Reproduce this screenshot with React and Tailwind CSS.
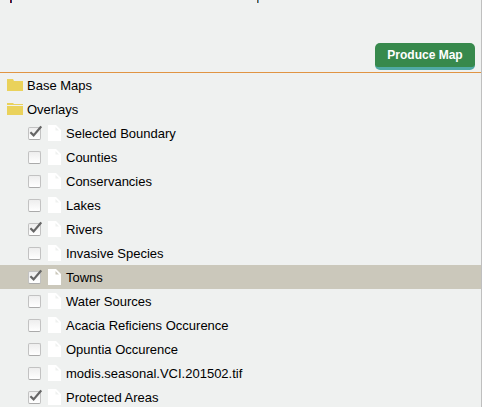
const layers = [
  { name: 'Selected Boundary', checked: true },
  { name: 'Counties' },
  { name: 'Conservancies' },
  { name: 'Lakes' },
  { name: 'Rivers', checked: true },
  { name: 'Invasive Species' },
  { name: 'Towns', checked: true, active: true },
  { name: 'Water Sources' },
  { name: 'Acacia Reficiens Occurence' },
  { name: 'Opuntia Occurence' },
  { name: 'modis.seasonal.VCI.201502.tif' },
  { name: 'Protected Areas', checked: true },
];

function Folder({ open }) {
  return (
    <svg className="mt-1.5 h-3 w-4 shrink-0" viewBox="0 0 16 12" fill="#ead25b">
      {open ? (
        <path d="M0 0h6l1 1h9v1H0zM0 3h16v9H0z" />
      ) : (
        <path d="M0 0h6l1 2h9v10H0z" />
      )}
    </svg>
  );
}

function FileIcon({ active }) {
  return (
    <svg className="mt-1 ml-[7px] h-4 w-[13px] shrink-0" viewBox="0 0 13 16">
      <path d="M0 0h8l5 5v11H0z" fill="#fff" />
      <path d="M7.5 2l3.5 3.5H7.5z" fill={active ? '#cbc8bb' : '#eff1f0'} />
    </svg>
  );
}

function Checkbox({ checked }) {
  return (
    <span
      role="checkbox"
      aria-checked={!!checked}
      className="mt-1.5 block size-[13px] shrink-0 rounded-[2px] border border-[#c2c2c2] border-b-[#aaaaaa] bg-linear-to-b from-[#eeeeee] to-white"
    >
      {checked && (
        <svg className="-mt-[3px] h-[13px] w-[13px]" viewBox="0 0 13 13" fill="none">
          <path d="M1.4 7.2L4.6 10.4L12.2 1.4" stroke="#666" strokeWidth="2.2" />
        </svg>
      )}
    </span>
  );
}

export default function App() {
  return (
    <div className="h-[407px] w-[482px] overflow-hidden border-r border-[#bfbfbf] bg-[#eff1f0] font-['Liberation_Sans',Arial,sans-serif] text-[13px] text-black">
      <header className="flex h-[73px] flex-col border-b border-[#e09443]">
        <div className="flex h-[3px] shrink-0">
          <span className="ml-[10px] w-px bg-[#8b0a16]" />
          <span className="w-px bg-[#183f86]" />
          <span className="ml-[245px] w-px bg-[#8b5a28]" />
          <span className="w-px bg-[#4a9bd5]" />
        </div>
        <div className="mt-10 flex justify-end pr-[6px]">
          <button className="h-[27px] w-[100px] rounded-[5px] border-b-[3px] border-[#50aaa5] bg-[#37894c] text-[12px] leading-6 font-bold text-white">
            Produce Map
          </button>
        </div>
      </header>
      <main>
        {['Base Maps', 'Overlays'].map((name, i) => (
          <div key={name} className="flex h-6 items-start pl-[7px]">
            <Folder open={i === 1} />
            <span className="ml-1 leading-[26px]">{name}</span>
          </div>
        ))}
        {layers.map(({ name, checked, active }) => (
          <div
            key={name}
            className={`flex h-6 items-start pl-7 ${active ? 'bg-[#cbc8bb]' : ''}`}
          >
            <Checkbox checked={checked} />
            <FileIcon active={active} />
            <span className="ml-[5px] leading-[26px] whitespace-nowrap">{name}</span>
          </div>
        ))}
      </main>
    </div>
  );
}
